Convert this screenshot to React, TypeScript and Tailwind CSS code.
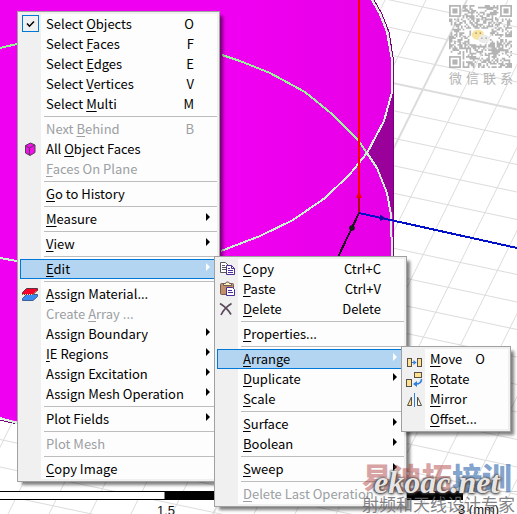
import type { ReactNode } from "react";

type Item = {
  // "&" goes in front of the mnemonic letter
  label: string;
  hint?: string;
  icon?: ReactNode;
  disabled?: boolean;
  active?: boolean;
  checked?: boolean;
  sub?: boolean;
};

type Entry = Item | "-";

/* ---------- icons, drawn on a 17x20 cell ---------- */

function Cell({ children }: { children: ReactNode }) {
  return (
    <svg width="17" height="20" viewBox="0 0 17 20" fill="none" aria-hidden="true">
      {children}
    </svg>
  );
}

const CheckIcon = (
  <Cell>
    <rect x="0.5" y="1.5" width="16" height="16" stroke="#0078d7" />
    <path d="M5 9.5l2.5 2.7L12 7.5" stroke="#000" strokeWidth="1.5" />
  </Cell>
);

const CubeIcon = (
  <Cell>
    <path d="M3.5 6.5l5-2.5 4.5 2v7.5L8 16.5l-4.5-2.5z" fill="#f010e8" stroke="#5a3a5a" />
    <path d="M3.5 6.5L7.5 9l5-3M7.5 9v7" stroke="#5a3a5a" />
  </Cell>
);

const MaterialIcon = (
  <Cell>
    <path d="M4.5 10.5h11v2l-4.500 4H0.500v-2z" fill="#3b8cf0" stroke="#3f5f94" />
    <path d="M4.5 4.5h11v2l-4.500 4H0.500v-2z" fill="#f8002c" stroke="#5a3440" />
    <path d="M1 10.5h10l4-4" stroke="#f4d9a0" strokeDasharray="1 1" />
  </Cell>
);

const CopyIcon = (
  <Cell>
    <path d="M1.5 3.5h5l3 3v7h-8z" fill="#fff" stroke="#5c5560" />
    <path d="M3 6.5h3M3 8.5h4M3 10.5h4" stroke="#5c5560" />
    <path d="M7.5 6.5h5l3 3v6h-8z" fill="#fff" stroke="#4a2e96" />
    <path d="M12.5 6.5v3h3M9 9.5h2M9 11.5h5M9 13.5h5" stroke="#4a2e96" />
  </Cell>
);

const PasteIcon = (
  <Cell>
    <rect x="1.5" y="4.5" width="13" height="11" rx="1" fill="#c0906c" stroke="#7a5a50" />
    <path d="M4.5 6.5v-2h2l1-1.500h2l1 1.500h2v2z" fill="#fff3c0" stroke="#6a5a58" />
    <path d="M7.5 8.5h6l2 2v6h-8z" fill="#fff" stroke="#4a2e96" />
    <path d="M9 11.5h4M9 13.5h5" stroke="#4a2e96" />
  </Cell>
);

const DeleteIcon = (
  <Cell>
    <path d="M1 4.5c4 2.5 8.5 6.5 11 11M12.5 4.5C8.5 7 4 11.5 2 16" stroke="#5b4a5c" strokeWidth="1.7" />
  </Cell>
);

const MoveIcon = (
  <Cell>
    <rect x="1.5" y="9.5" width="4" height="8" fill="#ffe08c" stroke="#55504c" />
    <rect x="11.5" y="9.5" width="4" height="8" fill="#ffe08c" stroke="#55504c" />
    <path d="M6 13.5h4" stroke="#2f7de0" />
    <path d="M7.5 11l3 2.5-3 2.5z" fill="#2f7de0" />
  </Cell>
);

const RotateIcon = (
  <Cell>
    <rect x="8.5" y="3.5" width="7" height="5" fill="#ffe08c" stroke="#55504c" />
    <rect x="0.5" y="10.5" width="5" height="7" fill="#ffe08c" stroke="#55504c" />
    <path d="M15.5 10c0 3-2 5-6 5" stroke="#2f7de0" strokeWidth="1.5" />
    <path d="M11 12l-4 3 4 3z" fill="#2f7de0" />
  </Cell>
);

const MirrorIcon = (
  <Cell>
    <path d="M8.5 4v14" stroke="#2f7de0" />
    <path d="M5.5 8v8.5h-4z" fill="#ffe08c" stroke="#55504c" />
    <path d="M11.5 8v8.5h4z" fill="#fffbe8" stroke="#55504c" />
  </Cell>
);

/* ---------- menu data ---------- */

const MAIN: Entry[] = [
  { label: "Select &Objects", hint: "O", icon: CheckIcon, checked: true },
  { label: "Select &Faces", hint: "F" },
  { label: "Select &Edges", hint: "E" },
  { label: "Select &Vertices", hint: "V" },
  { label: "Select &Multi", hint: "M" },
  "-",
  { label: "Next &Behind", hint: "B", disabled: true },
  { label: "All &Object Faces", icon: CubeIcon },
  { label: "&Faces On Plane", disabled: true },
  "-",
  { label: "&Go to History" },
  "-",
  { label: "&Measure", sub: true },
  "-",
  { label: "&View", sub: true },
  "-",
  { label: "&Edit", sub: true, active: true },
  "-",
  { label: "&Assign Material...", icon: MaterialIcon },
  { label: "Create &Array ...", disabled: true },
  { label: "Assign Boundary", sub: true },
  { label: "&IE Regions", sub: true },
  { label: "Assign Excitation", sub: true },
  { label: "Assign Mesh Operation", sub: true },
  "-",
  { label: "Plot Fields", sub: true },
  "-",
  { label: "Plot Mesh", disabled: true },
  "-",
  { label: "&Copy Image" },
];

const EDIT: Entry[] = [
  { label: "&Copy", hint: "Ctrl+C", icon: CopyIcon },
  { label: "&Paste", hint: "Ctrl+V", icon: PasteIcon },
  { label: "&Delete", hint: "Delete", icon: DeleteIcon },
  "-",
  { label: "&Properties..." },
  "-",
  { label: "&Arrange", sub: true, active: true },
  { label: "&Duplicate", sub: true },
  { label: "&Scale" },
  "-",
  { label: "&Surface", sub: true },
  { label: "&Boolean", sub: true },
  "-",
  { label: "&Sweep", sub: true },
  "-",
  { label: "&Delete Last Operation", disabled: true },
];

const ARRANGE: Entry[] = [
  { label: "&Move", hint: "O", icon: MoveIcon },
  { label: "&Rotate", icon: RotateIcon },
  { label: "&Mirror", icon: MirrorIcon },
  { label: "&Offset..." },
];

function Label({ text }: { text: string }) {
  const i = text.indexOf("&");
  if (i < 0) return <>{text}</>;
  return (
    <>
      {text.slice(0, i)}
      <span className="underline underline-offset-2">{text[i + 1]}</span>
      {text.slice(i + 2)}
    </>
  );
}

function Row({ item }: { item: Item }) {
  const tone = item.disabled ? "text-[#9c9fa3]" : "text-black";
  const fill = item.active ? "bg-[#b3d5f1] outline outline-1 -outline-offset-1 outline-[#0078d7]" : "";
  return (
    <button
      type="button"
      role={item.checked ? "menuitemcheckbox" : "menuitem"}
      aria-checked={item.checked}
      aria-haspopup={item.sub ? "menu" : undefined}
      disabled={item.disabled}
      className={`flex h-5 w-full items-center text-left ${tone} ${fill}`}
    >
      <span className="w-[26px] shrink-0 pl-0.5">{item.icon}</span>
      <span className="flex-1 whitespace-pre">
        <Label text={item.label} />
      </span>
      {item.hint && <span className="pr-[23px]">{item.hint}</span>}
      {item.sub && (
        <svg width="4" height="8" viewBox="0 0 4 8" className="mr-[7px] mb-1 shrink-0" aria-hidden="true">
          <path d="M0 0l4 4-4 4z" fill={item.active ? "#fff" : "#000"} />
        </svg>
      )}
    </button>
  );
}

function Menu({ name, entries, className }: { name: string; entries: Entry[]; className: string }) {
  return (
    <div
      role="menu"
      aria-label={name}
      className={`absolute border border-[#a0a0a0] bg-[#f0f0f0] p-0.5 shadow-[4px_4px_3px_-1px_rgba(0,0,0,0.5)] ${className}`}
    >
      <div className="bg-[linear-gradient(to_right,#f0f0f0_21px,#fdfdfd_21px)]">
        {entries.map((e, i) =>
          e === "-" ? (
            <div key={i} role="separator" className="ml-6 py-0.5">
              <div className="h-px bg-[#bdbdbd]" />
            </div>
          ) : (
            <Row key={i} item={e} />
          ),
        )}
      </div>
    </div>
  );
}

/* ---------- 3D view ---------- */

const steps = Array.from({ length: 30 }, (_, i) => i);

function Scene() {
  return (
    <svg
      className="absolute inset-0 h-full w-full"
      viewBox="0 0 517 514"
      preserveAspectRatio="xMinYMin slice"
      fill="none"
      aria-hidden="true"
    >
      <defs>
        <linearGradient id="body" x1="0" x2="1" y1="0" y2="0">
          <stop offset="0" stopColor="#f000f0" />
          <stop offset="0.6" stopColor="#f000f0" />
          <stop offset="1" stopColor="#e600e6" />
        </linearGradient>
      </defs>
      <rect width="517" height="514" fill="#fff" />
      {/* floor grid */}
      <g stroke="#dcdcdc">
        {steps.map((i) => (
          <path key={i} d={`M0 ${i * 27.5 - 165.5}l517 110`} strokeWidth={i === 6 ? 2 : 1} />
        ))}
        {steps.map((i) => (
          <path key={i} d={`M${i * 41 + 16} 0l-254 514`} strokeWidth={i === 11 ? 2 : 1} />
        ))}
      </g>
      {/* cylinder */}
      <path d="M0 0H373L381 14 388 32 393 60V380C300 440 100 440 0 418z" fill="url(#body)" />
      <path d="M393 92V216L387 193 377 168 368 153 384 121 391 92z" fill="#9a009a" />
      <g shapeRendering="crispEdges">
        <path d="M374 0L382 14 389 32 393.5 60V380M0 420L17 424" stroke="#780078" />
        <path d="M0 48L17 44M222 55L240 61 270 73 305 92 332 114 358 140 367 153" stroke="#98f698" strokeWidth="2" />
        <path d="M0 258L17 261M221 251L260 236 293 220 325 198 350 174 367 153 377 168 387 193 391 215 392 258" stroke="#c8f4d0" strokeWidth="2" />
        <path d="M372 0L380 14 387 32 392 60V92L384 121 367 153M0 418L17 423" stroke="#d5f8dc" strokeWidth="2" />
      </g>
      {/* axes */}
      <path d="M359 0V195" stroke="#f00" strokeWidth="2" />
      <path d="M359 195V213" stroke="#b00010" strokeWidth="2" />
      <path d="M359 191l3 7h-6z" fill="#f00000" />
      <g shapeRendering="crispEdges">
        <path d="M359 213L517 248" stroke="#0010c8" strokeWidth="2" />
        <path d="M359 213L338 257" stroke="#200020" strokeWidth="2" />
      </g>
      <path d="M380 214.5l6 4-6 2.5z" fill="#1010a0" />
      <circle cx="352" cy="228" r="2.8" fill="#102010" />
      {/* scale bar */}
      <rect x="-2" y="491.5" width="167" height="8" fill="#fff" stroke="#000" />
      <rect x="165" y="491" width="298" height="9" fill="#000" />
      <path d="M463 491.5h54" stroke="#d0d0d0" />
      <g fill="#111" fontFamily="Liberation Sans, sans-serif" fontSize="13">
        <text x="157" y="515">1.5</text>
        <text x="458" y="514">3 (mm)</text>
      </g>
    </svg>
  );
}

/* ---------- QR badge ---------- */

const SIZE = 37;

function inFinder(x: number, y: number) {
  return (x < 8 && y < 8) || (x > 28 && y < 8) || (x < 8 && y > 28);
}

function modules() {
  let seed = 77;
  let d = "";
  for (let y = 0; y < SIZE; y++) {
    for (let x = 0; x < SIZE; x++) {
      seed = (seed * 1103515245 + 12345) % 2147483648;
      const logo = x > 12 && x < 24 && y > 13 && y < 23;
      if (!inFinder(x, y) && !logo && seed / 2147483648 > 0.48) d += `M${x} ${y}h1v1h-1z`;
    }
  }
  return d;
}

function QrBadge() {
  return (
    <figure className="absolute top-[5px] right-1 w-16 text-[#b4b4b4]">
      <svg viewBox="0 0 37 37" className="w-[63px]" aria-hidden="true">
        <path d={modules()} fill="currentColor" />
        {[
          [0, 0],
          [30, 0],
          [0, 30],
        ].map(([x, y]) => (
          <g key={`${x}-${y}`} transform={`translate(${x} ${y})`}>
            <rect x="0.5" y="0.5" width="6" height="6" fill="#fff" stroke="currentColor" />
            <rect x="2" y="2" width="3" height="3" fill="currentColor" />
          </g>
        ))}
        <ellipse cx="17" cy="17.5" rx="3.6" ry="3" fill="#f8e3a0" />
        <ellipse cx="20.5" cy="20" rx="3.4" ry="2.5" fill="#ececec" />
        <path d="M15.5 16.5h.8M18 16.5h.8M19 19.5h.6M21.5 19.5h.6" stroke="#8a8068" strokeWidth="0.7" />
      </svg>
      <figcaption className="mt-0.5 flex justify-between font-['Noto_Sans_CJK_SC',sans-serif] text-[13px] leading-4">
        <span>微</span>
        <span>信</span>
        <span>联</span>
        <span>系</span>
      </figcaption>
    </figure>
  );
}

function Watermark() {
  return (
    <div className="pointer-events-none absolute top-[460px] left-[362px] whitespace-nowrap font-['Noto_Sans_CJK_SC',sans-serif]">
      <div className="text-[30px] leading-8 font-black text-[#a83230]/45">
        易迪拓<span className="text-[#2f66ac]/60">培训</span>
      </div>
      <div className="absolute top-1.5 left-3 font-['Liberation_Serif',serif] text-[32px] leading-8 font-bold text-[#e8e4e4] italic [text-shadow:0_0_2px_#333,1px_1px_3px_#444,-1px_0_3px_#555]">
        ekoac.net
      </div>
      <div className="mt-0.5 text-[17px] leading-5 text-[#6c6c70]/85">射频和天线设计专家</div>
    </div>
  );
}

export default function App() {
  return (
    <main className="relative min-h-screen overflow-hidden bg-white font-['Noto_Sans_CJK_SC',sans-serif] text-[13px] leading-5">
      <Scene />
      <QrBadge />
      <Menu name="Context" entries={MAIN} className="top-[11px] left-[17px] w-[203px]" />
      <Menu name="Edit" entries={EDIT} className="top-64 left-[214px] w-[193px]" />
      <Menu name="Arrange" entries={ARRANGE} className="top-[346px] left-[401px] w-[110px]" />
      <Watermark />
    </main>
  );
}
